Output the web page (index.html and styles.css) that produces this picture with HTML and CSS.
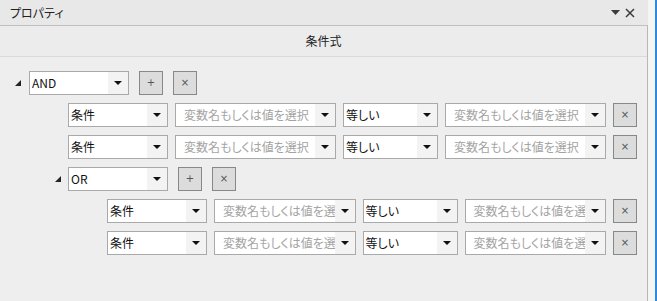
FILE: index.html
```html
<!DOCTYPE html>
<html lang="ja">
<head>
	<meta charset="utf-8" />
	<title>プロパティ</title>
	<link rel="stylesheet" href="styles.css">
</head>
<body>
	<div class="window">
		<div class="pane">
			<div class="titlebar">
				<span class="title">プロパティ</span>
				<span class="tools">
					<svg width="9" height="5" viewBox="0 0 9 5"><polygon points="0,0 9,0 4.5,5" fill="#3c3c3c"/></svg>
					<svg width="10" height="10" viewBox="0 0 10 10"><path d="M1 1L9 9M9 1L1 9" stroke="#3c3c3c" stroke-width="1.5"/></svg>
				</span>
			</div>
			<div class="body">
				<div class="heading">条件式</div>
				<div class="tree">
					<!-- AND group -->
					<div class="group-row lvl0">
						<span class="toggle"><svg width="6" height="6" viewBox="0 0 6 6"><polygon points="6,0 6,6 0,6" fill="#222"/></svg></span>
						<div class="combo"><span class="val">AND</span><span class="drop"></span></div>
						<button class="btn">+</button>
						<button class="btn">×</button>
					</div>
					<div class="cond-row lvl1">
						<div class="combo"><span class="val">条件</span><span class="drop"></span></div>
						<div class="combo"><span class="val hint">変数名もしくは値を選択</span><span class="drop"></span></div>
						<div class="combo"><span class="val">等しい</span><span class="drop"></span></div>
						<div class="combo"><span class="val hint">変数名もしくは値を選択</span><span class="drop"></span></div>
						<button class="btn">×</button>
					</div>
					<div class="cond-row lvl1">
						<div class="combo"><span class="val">条件</span><span class="drop"></span></div>
						<div class="combo"><span class="val hint">変数名もしくは値を選択</span><span class="drop"></span></div>
						<div class="combo"><span class="val">等しい</span><span class="drop"></span></div>
						<div class="combo"><span class="val hint">変数名もしくは値を選択</span><span class="drop"></span></div>
						<button class="btn">×</button>
					</div>
					<!-- OR group -->
					<div class="group-row lvl1">
						<span class="toggle"><svg width="6" height="6" viewBox="0 0 6 6"><polygon points="6,0 6,6 0,6" fill="#222"/></svg></span>
						<div class="combo"><span class="val">OR</span><span class="drop"></span></div>
						<button class="btn">+</button>
						<button class="btn">×</button>
					</div>
					<div class="cond-row lvl2">
						<div class="combo"><span class="val">条件</span><span class="drop"></span></div>
						<div class="combo"><span class="val hint">変数名もしくは値を選択</span><span class="drop"></span></div>
						<div class="combo"><span class="val">等しい</span><span class="drop"></span></div>
						<div class="combo"><span class="val hint">変数名もしくは値を選択</span><span class="drop"></span></div>
						<button class="btn">×</button>
					</div>
					<div class="cond-row lvl2">
						<div class="combo"><span class="val">条件</span><span class="drop"></span></div>
						<div class="combo"><span class="val hint">変数名もしくは値を選択</span><span class="drop"></span></div>
						<div class="combo"><span class="val">等しい</span><span class="drop"></span></div>
						<div class="combo"><span class="val hint">変数名もしくは値を選択</span><span class="drop"></span></div>
						<button class="btn">×</button>
					</div>
				</div>
			</div>
		</div>
		<div class="edge"></div>
	</div>
</body>
</html>
```

FILE: styles.css
```css
html, body { margin: 0; height: 100%; }
body {
	font-family: "Noto Sans CJK JP", sans-serif;
	font-size: 12px;
	font-feature-settings: "palt";
	color: #111;
	background: #f4f4f4;
	overflow: hidden;
}
.window { display: flex; height: 301px; width: 657px; }
.pane { width: 648px; display: flex; flex-direction: column; background: #eeeeee; }
.edge { flex: 1; display: flex; justify-content: flex-end; background: #f4f4f4; }
.edge::after { content: ""; width: 2px; background: #2a8ae0; }

.titlebar {
	height: 25px;
	background: #e8e8e8;
	border-bottom: 1px solid #bfbfbf;
	display: flex;
	align-items: center;
	justify-content: space-between;
	padding: 0 13px 0 10px;
}
.title { color: #222; }
.tools { display: flex; align-items: center; gap: 5px; }

.body { flex: 1; border-right: 1px solid #b8b8b8; }
.heading {
	height: 30px;
	line-height: 30px;
	text-align: center;
	background: #ececec;
	border-bottom: 1px solid #d9d9d9;
	color: #222;
}

.tree { padding: 14px 10px 0 0; }

.group-row { display: flex; align-items: center; height: 24px; margin-bottom: 8px; }
.group-row .combo { width: 100px; margin-right: 10px; }
.group-row .btn { width: 24px; margin-right: 10px; }
.toggle { width: 29px; display: flex; align-items: center; padding-left: 15px; box-sizing: border-box; }
.lvl1.group-row { padding-left: 39px; }
.lvl1.group-row .toggle { padding-left: 16px; }

.cond-row {
	display: grid;
	grid-template-columns: 100px 1fr 95px 1fr 24px;
	column-gap: 7px;
	height: 24px;
	margin-bottom: 8px;
}
.cond-row.lvl1 { padding-left: 68px; }
.cond-row.lvl2 { padding-left: 107px; }

.combo {
	height: 24px;
	box-sizing: border-box;
	border: 1px solid #a9a9a9;
	background: #fff;
	display: flex;
	overflow: hidden;
	min-width: 0;
}
.val {
	flex: 1;
	min-width: 0;
	white-space: nowrap;
	overflow: hidden;
	line-height: 22px;
	padding-left: 2px;
}
.val.hint { color: #a3a3a3; padding-left: 8px; }
.drop {
	width: 20px;
	flex: none;
	background: #f3f3f3;
	position: relative;
}
.drop::after {
	content: "";
	position: absolute;
	left: 6px;
	top: 9px;
	border-left: 4px solid transparent;
	border-right: 4px solid transparent;
	border-top: 4px solid #111;
}

.btn {
	height: 24px;
	padding: 0;
	box-sizing: border-box;
	border: 1px solid #888;
	background: #dcdcdc;
	color: #555;
	font-family: "DejaVu Sans", sans-serif;
	font-size: 10px;
	line-height: 20px;
}
```
